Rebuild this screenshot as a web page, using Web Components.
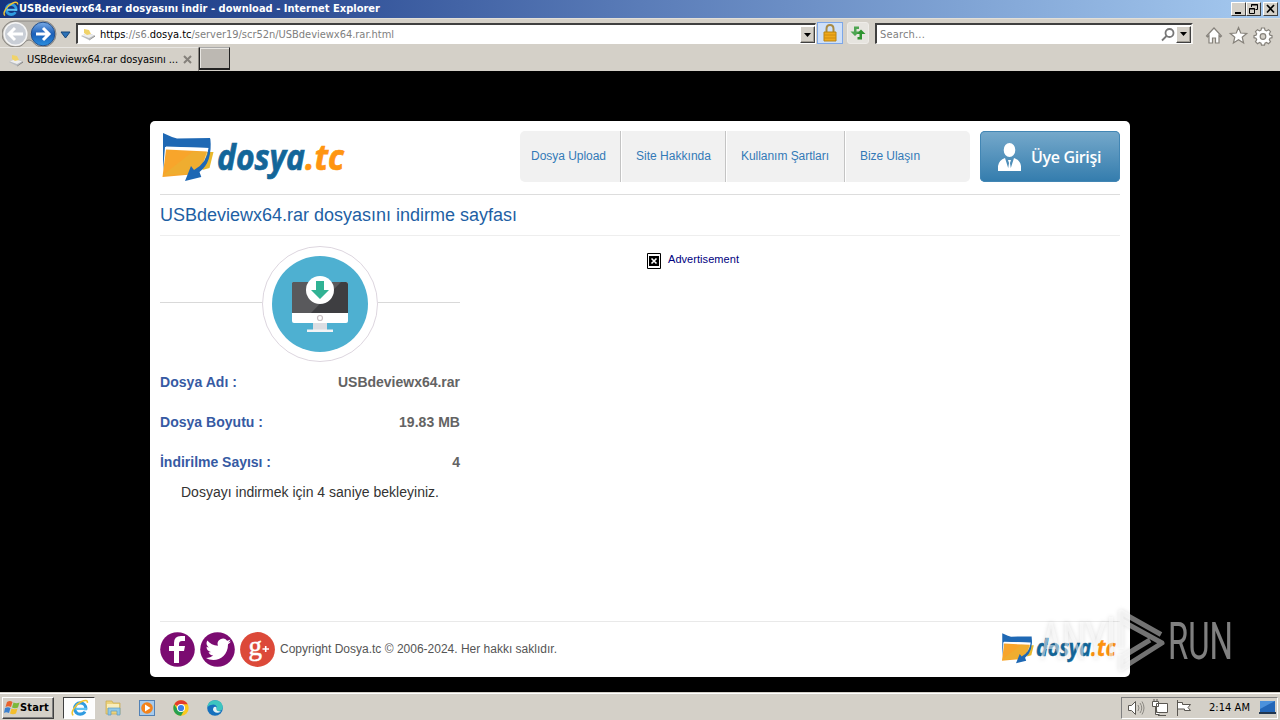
<!DOCTYPE html>
<html lang="tr">
<head>
<meta charset="utf-8">
<title>USBdeviewx64.rar dosyasını indir - download</title>
<style>html,body{margin:0;height:100%;background:#000;overflow:hidden}</style>
</head>
<body>
<desk-top></desk-top>
<script>
const define = (name, css, html) => customElements.define(name, class extends HTMLElement {
  constructor() {
    super();
    this.attachShadow({ mode: 'open' }).innerHTML = `<style>*{box-sizing:border-box}svg{display:block;flex:none}${css}</style>${html}`;
  }
});

define('desk-top', `
  :host{display:flex;flex-direction:column;width:1280px;height:720px;background:#000;position:relative;font-family:"Liberation Sans",sans-serif}
  main{flex:1;display:flex;justify-content:center;padding-top:50px}
  any-run{position:absolute;left:1030px;top:600px}`,
  `<ie-titlebar></ie-titlebar><ie-nav></ie-nav><ie-tabs></ie-tabs>
   <main><dosya-page></dosya-page></main><task-bar></task-bar><any-run></any-run>`);

define('ie-titlebar', `
  :host{display:flex;align-items:center;height:18px;background:linear-gradient(90deg,#15347f 0%,#2c4c94 22%,#5a7cb8 50%,#7fa3d4 75%,#a6caf0 100%);color:#fff;padding:0 2px 0 3px;font:bold 11px "DejaVu Sans Condensed","DejaVu Sans",sans-serif}
  fit-text{flex:1;margin-left:0;height:18px;line-height:18px}
  .w{display:flex}
  .b{width:15px;height:14px;background:#d4d0c8;border:1px solid;border-color:#fff #404040 #404040 #fff}
  .b:last-child{margin-left:2px}`,
  `<ie-logo></ie-logo><fit-text w="361">USBdeviewx64.rar dosyasını indir - download - Internet Explorer</fit-text>
   <div class="w">
   <div class="b"><svg width="13" height="12"><path d="M3 9h6v2H3z"/></svg></div>
   <div class="b"><svg width="13" height="12" fill="none" stroke="#000"><path d="M4.500 4V1.500h6v5H8.500M4 2h7M2.500 5.500h5v5h-5zM2 6h6"/></svg></div>
   <div class="b"><svg width="13" height="12" stroke="#000" stroke-width="1.700"><path d="M3 2l7 7.500M10 2L3 9.500"/></svg></div></div>`);

define('ie-logo', `:host{display:block;width:16px;height:16px}`,
  `<svg width="100%" height="100%" viewBox="0 0 16 16" fill="none"><circle cx="8.200" cy="8.500" r="5" stroke="#2f9be0" stroke-width="2.800"/><path d="M10 10h5v2.500z" fill="var(--gap,#1b3a84)"/><path d="M4 8.800h10" stroke="#62c4f2" stroke-width="2"/><path d="M2 14.500C-1 12 4 5 9 2.500c4-2 6-1.500 5.500 1" stroke="#f2c430" stroke-width="1.400"/></svg>`);

define('page-icon', `:host{display:block;width:16px;height:14px}`,
  `<svg width="16" height="14"><path d="M1 9l6-3 8 2.500-6 4.500z" fill="#b9bcc0"/><path d="M2 8.500l5-2.500 7 2.500-5 2.500z" fill="#eee"/><path d="M4 2l5 1 2 4-4 1-3-2z" fill="#f0d36a"/><path d="M9 13l6-4.500v1L9 13.500z" fill="#777"/></svg>`);

define('ie-nav', `
  :host{display:flex;height:29px;background:#d4d0c8;padding:1px 6px 0 2px;font:11px "DejaVu Sans Condensed","DejaVu Sans",sans-serif;border-top:1px solid #e2dfd8}
  .box{display:flex;align-items:center;background:#fff;height:21px;margin-top:3px;border:1px solid;border-color:#404040 #fff #fff #404040;border-top-width:2px;border-left-width:2px;color:#808080}
  .addr{width:740px;margin-left:4px;padding-left:2px}
  .addr fit-text{margin-left:4px}
  .search{width:318px;margin-left:6px;padding-left:3px;border-right:2px solid #f4f2ee}
  .sp{flex:1} b{font-weight:normal;color:#000}
  .dd{width:15px;height:17px;background:#d4d0c8;border:1px solid;border-color:#fff #404040 #404040 #fff;box-shadow:inset -1px -1px #a09c94}
  .k{width:26px;height:22px;margin:2px 0 0 1px;border:1px solid #7da7e8;background:#cfe0f8}
  .r{width:22px;height:22px;margin:2px 0 0 4px;border:1px solid #eeece8;border-radius:3px;background:#e6e4df}
  .tools{margin-left:12px}`,
  `<svg width="70" height="28" viewBox="2 19 70 28"><defs><linearGradient id="g" x2="0" y2="1"><stop stop-color="#79aae6"/><stop offset=".5" stop-color="#1b5fb8"/><stop offset="1" stop-color="#2a8fe0"/></linearGradient></defs>
   <path d="M15 20h28a13 13 0 010 26q-7 0-10-5-2-2-4-2t-4 2q-3 5-10 5a13 13 0 010-26" fill="#bbb8b2" stroke="#8b8883"/><circle cx="15.500" cy="33" r="11.300" fill="#c9ced6" stroke="#f5f5f5" stroke-width="1.500"/><circle cx="43" cy="33" r="11.800" fill="url(#g)" stroke="#24508c"/>
   <g fill="none" stroke-width="3" stroke="#fff"><path d="M9 33h14M15 27l-6 6 6 6"/><path d="M36 33h13M43 27l6 6-6 6"/></g><path d="M61 31h9l-4.500 6z" fill="#2c72b8" stroke="#164678"/></svg>
   <div class="box addr"><page-icon></page-icon><fit-text w="294"><b>https</b>://s6.<b>dosya.tc</b>/server19/scr52n/USBdeviewx64.rar.html</fit-text><span class="sp"></span><div class="dd"><svg width="13" height="15"><path d="M3 6h7l-3.500 4z"/></svg></div></div>
   <div class="k"><svg width="24" height="20"><path d="M8.500 9V6q0-4 3.500-4t3.500 4v3" fill="none" stroke="#a98b45" stroke-width="2"/><path d="M6 9h12v9H6z" fill="#efa91c" stroke="#b98413"/><path d="M6 12h12M6 15h12" stroke="#cf8c11"/></svg></div>
   <div class="r"><svg width="20" height="20" fill="#2e9430"><path d="M6 3.500h5v2.500H8.500v2.500h3L7 13 2.500 8.500H6z" fill="#4ea552"/><path d="M14 16.500H9.500V14h2v-3h-3L13 6.500 17.500 11H14z"/></svg></div>
   <div class="box search"><fit-text w="45">Search...</fit-text><span class="sp"></span><svg width="15" height="17" fill="none" stroke="#777" stroke-width="1.800"><circle cx="8.500" cy="7" r="4"/><path d="M5.500 10L1 14.500"/></svg><div class="dd"><svg width="13" height="15"><path d="M3 5h7l-3.500 4z"/></svg></div></div>
   <svg class="tools" width="68" height="28" viewBox="1206 20 68 28" fill="#fff" stroke="#85817a" stroke-width="1.200"><path d="M1207.500 36l7.500-8 7.500 8-1 1-1.500-1.500V43h-3.500v-5h-3v5h-3.500v-7.500l-1.500 1.500z"/><path d="M1239.500 27.500l2.200 5.500 6 .4-4.500 3.800 1.400 5.800-5.100-3.200-5.100 3.200 1.400-5.800-4.500-3.800 6-.4z"/>
   <g id="gear"><path d="M1262.500 28h3l.5 2.200 1.500.7 2-1.200 2 2-1.200 2 .7 1.500 2 .5v2l-2 .5-.7 1.500 1.200 2-2 2-2-1.200-1.500.7-.5 2h-3l-.5-2-1.500-.7-2 1.200-2-2 1.200-2-.7-1.500-2-.5v-2l2-.5.7-1.500-1.200-2 2-2 2 1.200 1.500-.7z"/><circle cx="1264" cy="36.500" r="2.800" fill="#d4d0c8"/></g></svg>`);

define('ie-tabs', `
  :host{display:flex;height:24px;background:#d4d0c8;font:11px "DejaVu Sans Condensed","DejaVu Sans",sans-serif;color:#000}
  .tab{width:199px;display:flex;align-items:center;padding-left:8px;border-top:1px solid #e9e7e3;border-right:1px solid #8a8680}
  fit-text{margin-left:3px}
  .x{margin-left:5px}
  .new{width:31px;height:23px;background:#bcb8b2;border:1px solid #222;border-top-color:#aaa;border-right-width:1px;border-bottom-width:2px;box-shadow:inset 1px 1px #e8e6e2}`,
  `<div class="tab"><page-icon></page-icon><fit-text w="151">USBdeviewx64.rar dosyasını ...</fit-text><svg class="x" width="9" height="9" stroke="#85817b" stroke-width="2"><path d="M1 1l7 7M8 1L1 8"/></svg></div><div class="new"></div>`);

define('dosya-logo', `:host{display:block}svg{width:100%;height:auto}text{font:italic bold 36px "Open Sans",sans-serif;stroke-width:.7}`,
  `<svg viewBox="161 131 184 52"><path d="M163 133l9 4 5 1.500 33-.5v10l-45-1-2 24z" fill="#1e68b4"/><path d="M166 146.500l43 1.500-1 4-43-2z" fill="#fff"/><path d="M207 152h6.500l-4 16-7 2z" fill="#e9b82c"/><path d="M166 149.500l41 2-4 12-12 11-28.500 2.500z" fill="#f8a52b"/><path d="M163 175l30-23.500 14 .5-4 12-12 10z" fill="#e9b233" opacity=".6"/><path d="M210.300 138q2.500 24-10.800 34l1.800 5-16.300 4 6-15 3 4q13-7 14.500-22z" fill="#1e68b4"/>
   <text x="217" y="169.500" textLength="88" lengthAdjust="spacingAndGlyphs" fill="#136699" stroke="#136699">dosya</text><text x="305" y="169.500" textLength="39" lengthAdjust="spacingAndGlyphs" fill="#ff9510" stroke="#ff9510">.tc</text></svg>`);

define('nav-menu', `
  :host{display:flex;width:450px;height:51px;background:#f1f1f1;border-radius:5px;color:#337ab7;font-size:12px;line-height:50px}
  div{border-right:1px solid #c4c4c4;padding-left:15px;box-shadow:1px 0 #fff}
  div:nth-of-type(1){padding-left:11px;width:101px}div:nth-of-type(2){width:105px}div:nth-of-type(3){width:119px}div:nth-of-type(4){border:0;box-shadow:none}`,
  `<div><fit-text w="75">Dosya Upload</fit-text></div><div><fit-text w="75">Site Hakkında</fit-text></div><div><fit-text w="88">Kullanım Şartları</fit-text></div><div><fit-text w="60">Bize Ulaşın</fit-text></div>`);

define('login-button', `
  :host{display:flex;align-items:center;width:140px;height:51px;border-radius:5px;background:linear-gradient(#76a9cb,#337cad);box-shadow:inset 0 0 0 1px #4286b4;color:#fff;font:600 16px "Open Sans",sans-serif;padding-left:18px}
  fit-text{margin-left:10px}`,
  `<svg width="23" height="28" fill="#fff"><ellipse cx="11.500" cy="7" rx="5.800" ry="7"/><path d="M0 28v-5q1-6 7-8l3.200 10L11 20l-1-3h3l-1 3 .8 5L16 15q6 2 7 8v5z"/></svg><fit-text w="70">Üye Girişi</fit-text>`);

define('download-badge', `
  :host{display:flex;align-items:center;width:300px;height:116px}
  i{flex:0 0 82px;height:1px;background:#d9d9d9;margin-bottom:3px}i:first-of-type{flex-basis:102px}`,
  `<i></i><svg width="116" height="116"><circle cx="58" cy="58" r="57.500" fill="#fff" stroke="#ddd6df"/><circle cx="58" cy="58" r="48" fill="#4eb0d1"/>
   <path d="M51 77h14v8H51z" fill="#dcdde2"/><path d="M45 83.500h26V86H45z" fill="#f2f3f5"/><rect x="30" y="36" width="56" height="41" rx="2" fill="#fff"/><path d="M30 67V38q0-2 2-2h52q2 0 2 2v29z" fill="#3e3e41"/><path d="M30 67V38q0-2 2-2h47L49 67z" fill="#59595c"/><circle cx="58" cy="72" r="2.500" fill="none" stroke="#c9bfc3" stroke-width="1.200"/><circle cx="58" cy="44" r="14" fill="#fff"/><path d="M54 35h8v9h5l-9 9-9-9h5z" fill="#31b294"/></svg><i></i>`);

define('info-row', `:host{display:flex;justify-content:space-between;height:40px;line-height:40px;font-size:14px;font-weight:bold;color:#636363}::slotted([slot=k]){color:#365aa3}`,
  `<slot name="k"></slot><slot></slot>`);

define('social-icons', `:host{display:flex;gap:5px}text{font:27px "Liberation Serif",serif}`,
  `<svg width="35" height="35"><circle cx="17.500" cy="17.500" r="17.300" fill="#7b0b71"/><path d="M14 31V19H9v-5h5v-3q0-7 7-7h4v5h-3q-3 0-3 3v2h6l-1 5h-5v12z" fill="#fff"/></svg>
   <svg width="35" height="35"><circle cx="17.500" cy="17.500" r="17.300" fill="#7b0b71"/><path transform="translate(4.500 4) scale(1.120)" d="M23.600 4.900a9 9 0 01-2.500.8 4.500 4.500 0 002-2.600 9 9 0 01-2.900 1.100A4.700 4.700 0 0012 8.600C8 8.500 4.800 6.700 2.500 4c-1.500 3-.2 5 1.500 6.200-.8 0-1.500-.2-2.200-.6 0 2.400 1.600 4.200 3.800 4.700q-1 .3-2 0a4.700 4.700 0 004.200 3.200A9.500 9.500 0 011 19.500c8 5 20 .5 20-12.100a8 8 0 002.600-2.500z" fill="#fff"/></svg>
   <svg width="35" height="35"><circle cx="17.500" cy="17.500" r="17.400" fill="#dc4939"/><text x="8.500" y="22.500" fill="#fff" stroke="#fff" stroke-width=".5">g</text><path d="M22.500 17h6.500M25.700 14v6" stroke="#fff" stroke-width="1.600"/></svg>`);

define('dosya-page', `
  :host{display:flex;flex-direction:column;width:980px;height:556px;background:#fff;border-radius:5px;padding:10px}
  header{display:flex;height:64px;border-bottom:1px solid #ddd}
  header dosya-logo{width:184px;margin-left:1px;margin-right:175px}
  login-button{margin-left:10px}
  h1{margin:0;height:41px;line-height:40px;font-size:18px;font-weight:normal;color:#1e5fa4;border-bottom:1px solid #eee}
  section{flex:1;display:flex}
  .l{width:300px;padding-top:10px}
  p{margin:0;font-size:14px;line-height:20px;color:#333;padding-left:21px}
  .ad{display:flex;margin:16px 0 0 187px;font-size:11px;color:#000080;height:18px;line-height:14px}
  .ad svg{margin:1px 7px 0 0}
  footer{display:flex;height:46px;border-top:1px solid #e9e9e9;padding-top:10px;font-size:12px;color:#555}
  footer fit-text{margin-left:5px;line-height:34px;flex:1}
  footer dosya-logo{width:115px;margin:0 4px 0 0}`,
  `<header><dosya-logo></dosya-logo><nav-menu></nav-menu><login-button></login-button></header>
   <h1><fit-text w="357">USBdeviewx64.rar dosyasını indirme sayfası</fit-text></h1>
   <section><div class="l"><download-badge></download-badge>
   <info-row><fit-text slot="k" w="77">Dosya Adı :</fit-text><fit-text w="122">USBdeviewx64.rar</fit-text></info-row>
   <info-row><fit-text slot="k" w="103">Dosya Boyutu :</fit-text><fit-text w="61">19.83 MB</fit-text></info-row>
   <info-row><fit-text slot="k" w="111">İndirilme Sayısı :</fit-text><fit-text w="8">4</fit-text></info-row>
   <p><fit-text w="258">Dosyayı indirmek için 4 saniye bekleyiniz.</fit-text></p></div>
   <div class="ad"><svg width="14" height="16"><path d="M.5.500h13v15H.500z" fill="#fff" stroke="#000"/><path d="M2 3h10v10H2z"/><path d="M4.500 5.500l5 5M9.500 5.500l-5 5" stroke="#fff" stroke-width="1.600"/></svg><fit-text w="71">Advertisement</fit-text></div></section>
   <footer><social-icons></social-icons><fit-text w="277">Copyright Dosya.tc © 2006-2024. Her hakkı saklıdır.</fit-text><dosya-logo></dosya-logo></footer>`);

define('task-bar', `
  :host{display:flex;align-items:center;height:28px;background:#d4d0c8;border-top:1px solid #d4d0c8;box-shadow:inset 0 1px #fff;padding:2px 2px 0;font:11px "DejaVu Sans Condensed","DejaVu Sans",sans-serif;color:#000}
  .start{display:flex;align-items:center;width:52px;height:22px;border:1px solid;border-color:#fff #404040 #404040 #fff;box-shadow:inset -1px -1px #808080;font-weight:bold;padding-left:1px}
  .start fit-text{margin-left:-1px}
  .act{width:32px;height:22px;margin-left:9px;border:1px solid;border-color:#404040 #fff #fff #404040;background:#fdfdfd;padding:1px 0 0 7px}
  ie-logo{--gap:#fff;width:18px;height:18px}
  .apps{margin-left:8px}
  .tray{display:flex;align-items:center;margin-left:auto;width:157px;height:22px;border:1px solid;border-color:#808080 #fff #fff #808080;padding-left:5px}
  .tray fit-text{margin:0 9px 0 15px}`,
  `<div class="start"><svg width="17" height="17"><path d="M3 3q3-2 5.500 0L7 8Q4 6.500 1.500 8z" fill="#e8622d"/><path d="M9.500 3.500q3 1.500 6 0L14 8.500q-3 1.500-6 0z" fill="#7cb83a"/><path d="M1 9q3-1.500 5.500 0L5 14q-3-1.500-5 0z" fill="#3b80cf"/><path d="M7.500 9.500q3 1.500 6 0L12 14.500q-3 1.500-6 0z" fill="#f4be2c"/></svg><fit-text w="29">Start</fit-text></div>
   <div class="act"><ie-logo></ie-logo></div>
   <svg class="apps" width="122" height="22" viewBox="103 696 122 22"><path d="M106 700h6l1 2h7v11h-14z" fill="#ecd27c" stroke="#c9a94c" stroke-width=".7"/><path d="M107 703h12v4h-12z" fill="#f9edbb"/><path d="M108 714v-7h12v7h-3v-4h-6v4z" fill="#8fc8e8" stroke="#5f9cc0" stroke-width=".7"/>
   <rect x="139.500" y="699.500" width="15" height="15" fill="#a7cbed" stroke="#5281b5"/><circle cx="147" cy="707" r="5.800" fill="#f3831c"/><path d="M145 703.500v7l5.500-3.500z" fill="#fff"/>
   <circle cx="181" cy="707" r="7.700" fill="#fbc91e"/><path d="M181 707l-6.700-3.800A7.700 7.700 0 01187.700 703.200H181z" fill="#e33b2e"/><path d="M174.300 703.200A7.700 7.700 0 00181 714.700l3.300-5.800-6.600 0z" fill="#27a050"/><circle cx="181" cy="707" r="4" fill="#fff"/><circle cx="181" cy="707" r="3.100" fill="#3c7fe8"/>
   <circle cx="215" cy="707" r="7.800" fill="#1670bd"/><path d="M207.300 706q1-6.800 7.700-6.800 7 0 7.800 6.800 0 4-4.500 4l-2-1q2-5-3-5.500-4 0-6 2.500z" fill="#3dc5bf"/><path d="M214 706q3-1 2.500 2-.5 2 4.500 2.500-4 2.500-7 0-2-2 0-4.500z" fill="#e4f3f4"/></svg>
   <div class="tray"><svg width="67" height="20" viewBox="1128 697 67 20" fill="#fff" stroke="#5a5752"><path d="M1129.500 704.500h3l4-4v13l-4-4h-3z"/><path d="M1139 704q2 3 0 6M1141 702q3.500 5 0 10M1143 700.500q4 6.500 0 13" fill="none" stroke="#8a8781"/><path d="M1157.500 702.500h11v9h-11zM1159 714.500h8M1153.500 700.500h6v5h-6zM1155 698v2M1158 698v2M1156.500 706v7.500h4"/><path d="M1178.500 699v16M1178.500 701.500h5v2h8l-2.500 3 2.500 3h-6v-1.500h-7z"/></svg><fit-text w="41">2:14 AM</fit-text><svg width="17" height="15"><path d="M1 1h15v11H1z" fill="#2366b8"/><path d="M1 1h15L1 9z" fill="#4c91dc"/><path d="M0 12h17v2H0z" fill="#22364f"/></svg></div>`);

define('any-run', `:host{display:block;width:210px;height:80px;pointer-events:none}text{font:400 51px Roboto,"Open Sans",sans-serif}.s{filter:drop-shadow(0 0 2px #0004)}`,
  `<svg class="s" width="210" height="80" viewBox="1030 600 210 80"><g fill="#fff" opacity=".5"><text x="1040" y="659" textLength="66" lengthAdjust="spacingAndGlyphs">ANY</text><text x="1168" y="659" textLength="65" lengthAdjust="spacingAndGlyphs">RUN</text>
   <path d="M1109 617h4v41h-4z"/></g><g fill="none" stroke="#fff" stroke-width="5" opacity=".45" stroke-linejoin="round"><path d="M1121 649v-37l40 22.500M1121 654v15l41-26-40-22M1122 657l28-17"/></g></svg>`);

/* Text run whose tracking is set so that it occupies a given width. */
customElements.define('fit-text', class extends HTMLElement {
  constructor() {
    super();
    this.attachShadow({ mode: 'open' }).innerHTML = '<style>:host{display:block;white-space:nowrap}</style><slot></slot>';
  }
  connectedCallback() {
    const r = document.createRange();
    r.selectNodeContents(this);
    const n = this.textContent.length;
    const d = (+this.getAttribute('w') - r.getBoundingClientRect().width) / n;
    if (n > 1) this.style.letterSpacing = d.toFixed(3) + 'px';
  }
});
</script>
</body>
</html>
